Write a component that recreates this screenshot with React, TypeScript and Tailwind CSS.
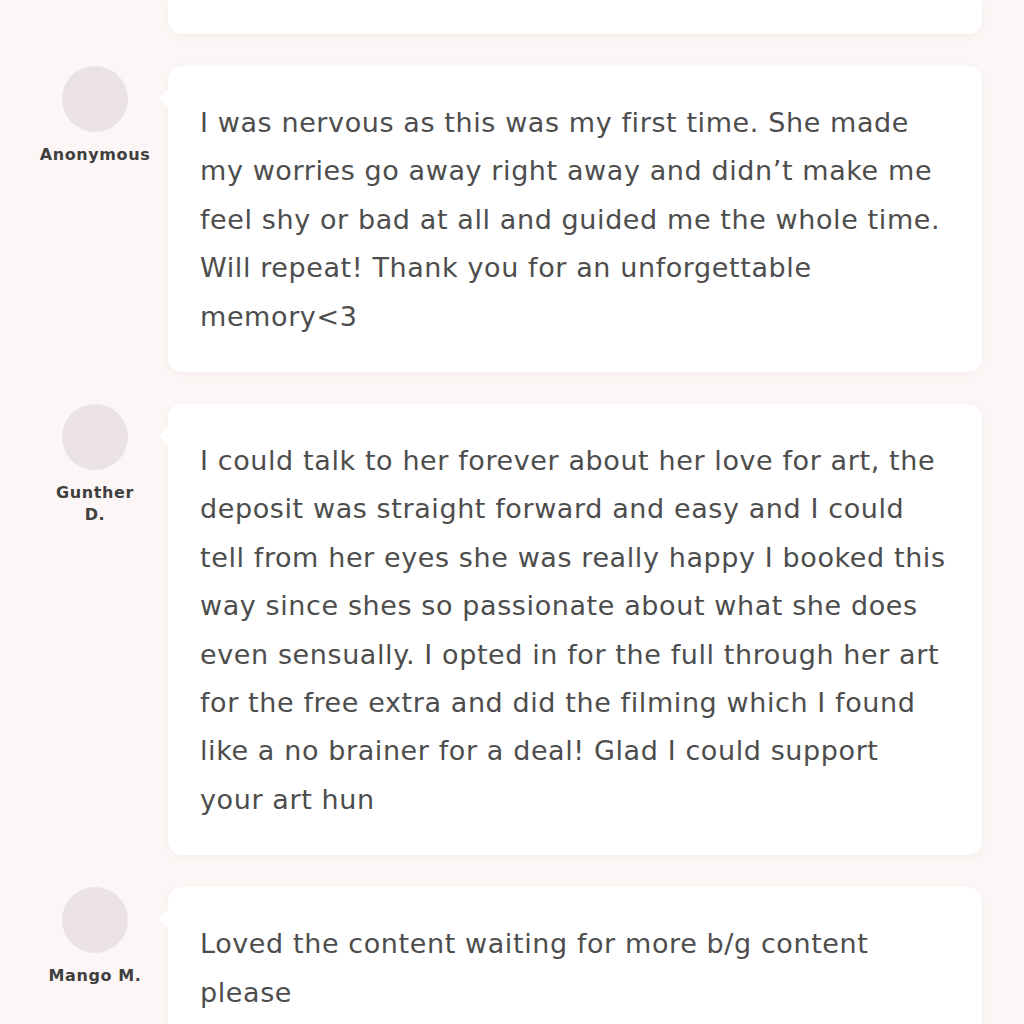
import React from 'react';

type Review = {
  name: string[];
  lines: string[];
};

const reviews: Review[] = [
  {
    name: ['Anonymous'],
    lines: [
      'I was nervous as this was my first time. She made',
      'my worries go away right away and didn\u2019t make me',
      'feel shy or bad at all and guided me the whole time.',
      'Will repeat! Thank you for an unforgettable',
      'memory<3',
    ],
  },
  {
    name: ['Gunther', 'D.'],
    lines: [
      'I could talk to her forever about her love for art, the',
      'deposit was straight forward and easy and I could',
      'tell from her eyes she was really happy I booked this',
      'way since shes so passionate about what she does',
      'even sensually. I opted in for the full through her art',
      'for the free extra and did the filming which I found',
      'like a no brainer for a deal! Glad I could support',
      'your art hun',
    ],
  },
  {
    name: ['Mango M.'],
    lines: ['Loved the content waiting for more b/g content', 'please', ''],
  },
];

function ReviewRow({ review }: { review: Review }) {
  return (
    <div className="flex items-start">
      {/* Author */}
      <div className="ml-[30px] w-[130px] shrink-0 flex flex-col items-center">
        <div className="w-[66px] h-[66px] rounded-full bg-[#ebe2e3]" />
        <div className="mt-[12px] text-center text-[16px] leading-[22px] font-bold tracking-[0.6px] text-[#3f3f3f]">
          {review.name.map((n) => (
            <div key={n}>{n}</div>
          ))}
        </div>
      </div>

      {/* Bubble */}
      <div className="relative ml-[8px] mr-[42px] flex-1 bg-white rounded-[14px] shadow-[0_2px_10px_rgba(180,150,150,0.10)] px-[32px] pt-[33px] pb-[31px]">
        <div className="absolute left-[-9px] top-[22px] w-0 h-0 border-y-[10px] border-y-transparent border-r-[10px] border-r-white" />
        <div className="text-[27px] leading-[48.4px] text-[#4d4d4d] tracking-[0.6px]">
          {review.lines.map((l, i) => (
            <div key={i} className="whitespace-nowrap">
              {l || '\u00a0'}
            </div>
          ))}
        </div>
      </div>
    </div>
  );
}

export default function App() {
  return (
    <div
      className="min-h-screen w-full bg-[#fcf7f6] overflow-hidden"
      style={{ fontFamily: '"DejaVu Sans", "Open Sans", sans-serif' }}
    >
      <div className="ml-[168px] mr-[42px] h-[34px] bg-white rounded-b-[14px] shadow-[0_2px_10px_rgba(180,150,150,0.10)]" />
      <div className="mt-[32px] flex flex-col gap-[32px]">
        {reviews.map((r) => (
          <ReviewRow key={r.name.join(' ')} review={r} />
        ))}
      </div>
    </div>
  );
}
